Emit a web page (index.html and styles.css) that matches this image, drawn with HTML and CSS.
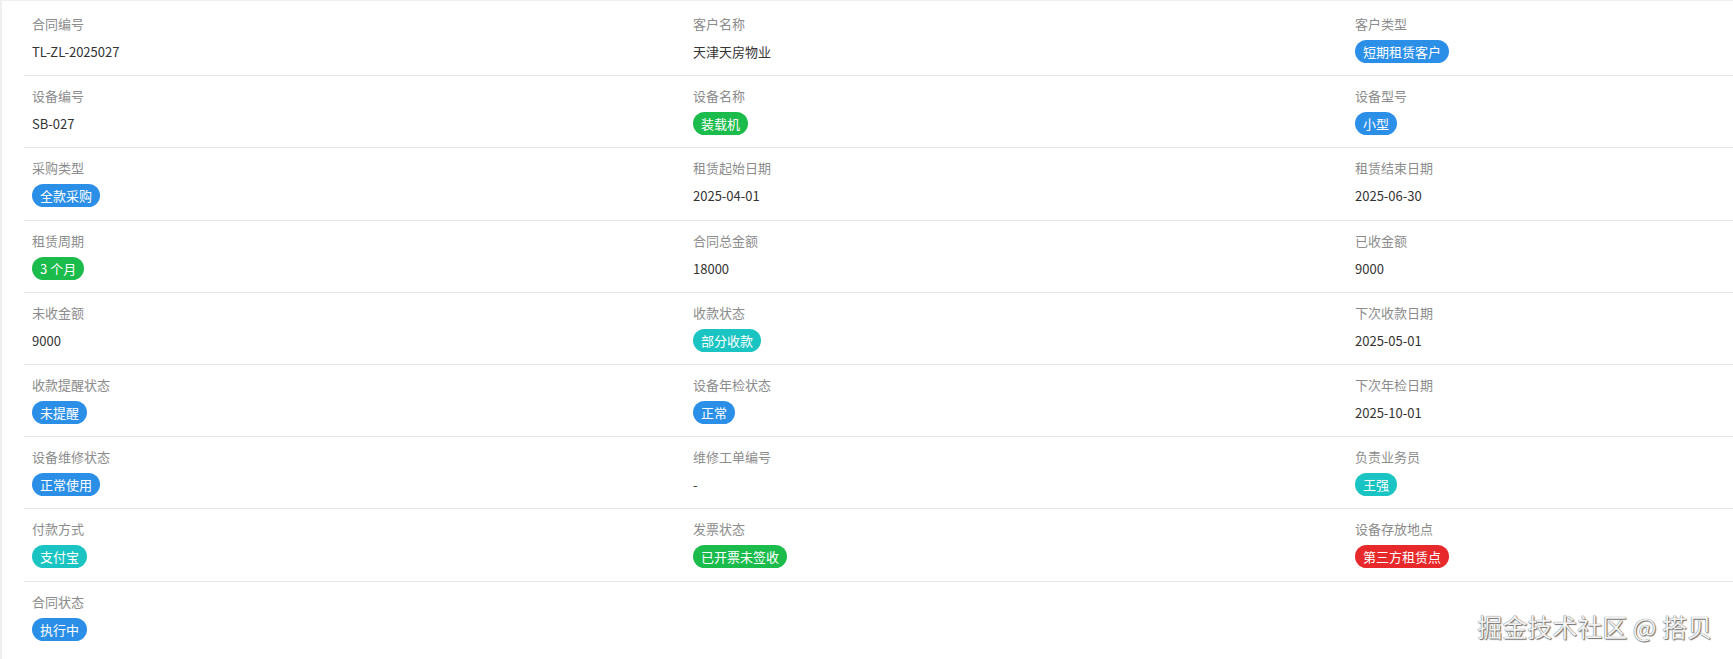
FILE: index.html
```html
<!DOCTYPE html>
<html lang="zh-CN">
<head>
    <meta charset="UTF-8">
    <meta name="viewport" content="width=device-width, initial-scale=1.0">
    <title>合同详情</title>
    <link rel="stylesheet" href="styles.css">
</head>
<body>
    <div class="page">
        <div class="detail-grid">
            <div class="cell"><div class="label">合同编号</div><div class="value">TL-ZL-2025027</div></div>
            <div class="cell"><div class="label">客户名称</div><div class="value">天津天房物业</div></div>
            <div class="cell"><div class="label">客户类型</div><div class="value"><span class="tag blue">短期租赁客户</span></div></div>

            <div class="cell"><div class="label">设备编号</div><div class="value">SB-027</div></div>
            <div class="cell"><div class="label">设备名称</div><div class="value"><span class="tag green">装载机</span></div></div>
            <div class="cell"><div class="label">设备型号</div><div class="value"><span class="tag blue">小型</span></div></div>

            <div class="cell"><div class="label">采购类型</div><div class="value"><span class="tag blue">全款采购</span></div></div>
            <div class="cell"><div class="label">租赁起始日期</div><div class="value">2025-04-01</div></div>
            <div class="cell"><div class="label">租赁结束日期</div><div class="value">2025-06-30</div></div>

            <div class="cell"><div class="label">租赁周期</div><div class="value"><span class="tag green">3 个月</span></div></div>
            <div class="cell"><div class="label">合同总金额</div><div class="value">18000</div></div>
            <div class="cell"><div class="label">已收金额</div><div class="value">9000</div></div>

            <div class="cell"><div class="label">未收金额</div><div class="value">9000</div></div>
            <div class="cell"><div class="label">收款状态</div><div class="value"><span class="tag cyan">部分收款</span></div></div>
            <div class="cell"><div class="label">下次收款日期</div><div class="value">2025-05-01</div></div>

            <div class="cell"><div class="label">收款提醒状态</div><div class="value"><span class="tag blue">未提醒</span></div></div>
            <div class="cell"><div class="label">设备年检状态</div><div class="value"><span class="tag blue">正常</span></div></div>
            <div class="cell"><div class="label">下次年检日期</div><div class="value">2025-10-01</div></div>

            <div class="cell"><div class="label">设备维修状态</div><div class="value"><span class="tag blue">正常使用</span></div></div>
            <div class="cell"><div class="label">维修工单编号</div><div class="value">-</div></div>
            <div class="cell"><div class="label">负责业务员</div><div class="value"><span class="tag cyan">王强</span></div></div>

            <div class="cell"><div class="label">付款方式</div><div class="value"><span class="tag cyan">支付宝</span></div></div>
            <div class="cell"><div class="label">发票状态</div><div class="value"><span class="tag green">已开票未签收</span></div></div>
            <div class="cell"><div class="label">设备存放地点</div><div class="value"><span class="tag red">第三方租赁点</span></div></div>

            <div class="cell last"><div class="label">合同状态</div><div class="value"><span class="tag blue">执行中</span></div></div>
        </div>
        <div class="watermark">掘金技术社区 @ 搭贝</div>
    </div>
</body>
</html>
```

FILE: styles.css
```css
html, body {
    margin: 0;
    padding: 0;
}
body {
    background-color: #efefef;
    font-family: "Microsoft YaHei", "Noto Sans CJK SC", "Noto Sans", sans-serif;
    font-size: 13px;
    color: #333;
    overflow: hidden;
}
.page {
    position: relative;
    margin: 1px 0 0 2px;
    height: 658px;
    background-color: #fff;
    padding: 3px 0 0 22px;
    box-sizing: border-box;
}
.detail-grid {
    display: grid;
    grid-template-columns: 661px 662px 1fr;
}
.cell {
    padding: 10px 8px 12.2px;
    border-bottom: 1px solid #e6e6e6;
}
.cell.last {
    border-bottom: none;
}
.label {
    line-height: 20px;
    color: #8c8c8c;
}
.value {
    margin-top: 6px;
    line-height: 23px;
    height: 23px;
    color: #333;
}
.tag {
    display: inline-block;
    padding: 0 8px;
    height: 23px;
    line-height: 23px;
    border-radius: 12px;
    color: #fff;
    vertical-align: top;
}
.tag.blue {
    background-color: #2b8fe8;
}
.tag.green {
    background-color: #1bbb4c;
}
.tag.cyan {
    background-color: #19c4c2;
}
.tag.red {
    background-color: #e7292b;
}
.watermark {
    position: absolute;
    right: 21px;
    bottom: 18px;
    font-size: 25px;
    line-height: 30px;
    color: #f2f2f2;
    text-shadow: 0 0 1px #444, 1px 1px 1px #777;
}
```
